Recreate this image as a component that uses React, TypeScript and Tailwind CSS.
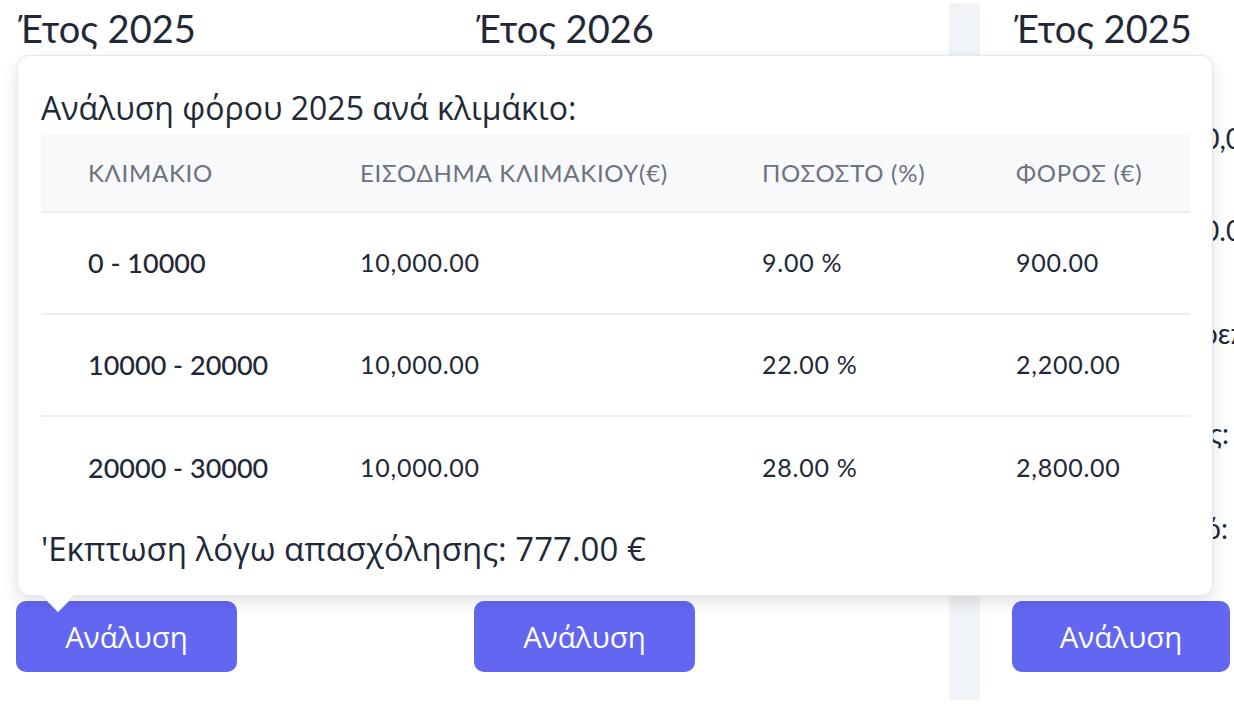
import React from "react";

const lato = { fontFamily: "Lato, 'Noto Sans', sans-serif" } as const;
const ui = { fontFamily: "'Open Sans', 'Noto Sans', sans-serif" } as const;

function Heading({ children }: { children: React.ReactNode }) {
  return (
    <h2 style={lato} className="mt-[9px] text-[38px] leading-none text-[#1f2937]">
      {children}
    </h2>
  );
}

function Button({ w }: { w: string }) {
  return (
    <button
      style={ui}
      className={`${w} h-[71px] rounded-[10px] bg-[#6366f1] text-[29.5px] leading-none text-white`}
    >
      Ανάλυση
    </button>
  );
}

function Info({ variant }: { variant: "hidden" | "right" }) {
  if (variant === "hidden") {
    return (
      <div style={lato} className="flex flex-col pl-[6px] text-[28px] leading-[28px] text-[#1f2937]">
        <p className="mt-[77px]">Εισόδημα: 30,000.00 €</p>
        <p className="mt-[64px]">Φόρος: 3,900.00 €</p>
        <p className="mt-[75px]">Επιστρεπτέο ποσό: 0.00 €</p>
        <p className="mt-[72px]">Κρατήσεις: 0.00 €</p>
        <p className="mt-[67px]">Καθαρό ποσό: 26,100.00 €</p>
      </div>
    );
  }
  return (
    <div style={lato} className="flex flex-col whitespace-nowrap text-[28px] leading-[28px] text-[#1f2937]">
      <p className="mt-[77px]">
        <span className="inline-block w-[175px]">Εισόδημα:</span>30,000.00 €
      </p>
      <p className="mt-[64px]">
        <span className="inline-block w-[136px]">Φόρος:</span>3,900.00 €
      </p>
      <p className="mt-[75px] pl-[120px]">Επιστρεπτέο ποσό: 0.00 €</p>
      <p className="mt-[72px]">
        <span className="inline-block w-[217px] text-right">Κρατήσεις:</span> 0.00 €
      </p>
      <p className="mt-[67px]">
        <span className="inline-block w-[216px] text-right">Καθαρό ποσό:</span> 26,100.00 €
      </p>
    </div>
  );
}

const rows = [
  { range: "0 - 10000", income: "10,000.00", pct: "9.00 %", tax: "900.00" },
  { range: "10000 - 20000", income: "10,000.00", pct: "22.00 %", tax: "2,200.00" },
  { range: "20000 - 30000", income: "10,000.00", pct: "28.00 %", tax: "2,800.00" },
];

const cols = "grid grid-cols-[272px_402px_254px_221px] items-center pl-[47px]";

function Popover() {
  return (
    <div className="absolute left-[17px] top-[55px] h-[541px] w-[1196px] rounded-[12px] border border-[#e5e7eb] bg-white shadow-[0_6px_16px_rgba(0,0,0,0.12)]">
      <div className="absolute bottom-[-12px] left-[28px] h-[24px] w-[24px] rotate-45 border-b border-r border-[#e5e7eb] bg-white" />
      <div className="relative flex flex-col pl-[23px] pr-[22px] pt-[36px]">
        <p style={ui} className="text-[32px] leading-none text-[#1f2937]">
          Ανάλυση φόρου 2025 ανά κλιμάκιο:
        </p>
        <div className="mt-[10px] flex flex-col">
          <div
            style={lato}
            className={`${cols} h-[79px] border-b-2 border-[#eceef2] bg-[#f8f9fb] text-[24px] uppercase tracking-[0.03em] text-[#6b7280]`}
          >
            <span>ΚΛΙΜΑΚΙΟ</span>
            <span>ΕΙΣΟΔΗΜΑ ΚΛΙΜΑΚΙΟΥ(€)</span>
            <span>ΠΟΣΟΣΤΟ (%)</span>
            <span>ΦΟΡΟΣ (€)</span>
          </div>
          {rows.map((r, i) => (
            <div
              key={r.range}
              style={lato}
              className={`${cols} h-[102px] ${i < rows.length - 1 ? "border-b-2 border-[#eceef2]" : ""} text-[#1f2937]`}
            >
              <span className="text-[27px] font-medium">{r.range}</span>
              <span className="text-[25px] tracking-[0.03em]">{r.income}</span>
              <span className="text-[25px] tracking-[0.03em]">{r.pct}</span>
              <span className="text-[25px] tracking-[0.03em]">{r.tax}</span>
            </div>
          ))}
        </div>
        <p style={ui} className="mt-[13px] text-[33px] leading-none text-[#1f2937]">
          'Εκπτωση λόγω απασχόλησης: 777.00 €
        </p>
      </div>
    </div>
  );
}

export default function App() {
  return (
    <div className="relative h-[706px] w-[1234px] overflow-hidden bg-white">
      <div className="flex h-full pl-[16px]">
        <div className="flex w-[458px] shrink-0 flex-col">
          <div className="pl-[2px]">
            <Heading>Έτος 2025</Heading>
          </div>
          <Info variant="hidden" />
          <div className="mt-[59px]">
            <Button w="w-[221px]" />
          </div>
        </div>
        <div className="flex w-[475px] shrink-0 flex-col">
          <div className="pl-[2px]">
            <Heading>Έτος 2026</Heading>
          </div>
          <Info variant="hidden" />
          <div className="mt-[59px]">
            <Button w="w-[221px]" />
          </div>
        </div>
        <div className="mt-[3px] h-[697px] w-[31px] shrink-0 bg-[#f0f3f8]" />
        <div className="flex min-w-0 flex-1 flex-col pl-[32px]">
          <div className="pl-[2px]">
            <Heading>Έτος 2025</Heading>
          </div>
          <Info variant="right" />
          <div className="mt-[59px]">
            <Button w="w-[218px]" />
          </div>
        </div>
      </div>
      <Popover />
    </div>
  );
}
